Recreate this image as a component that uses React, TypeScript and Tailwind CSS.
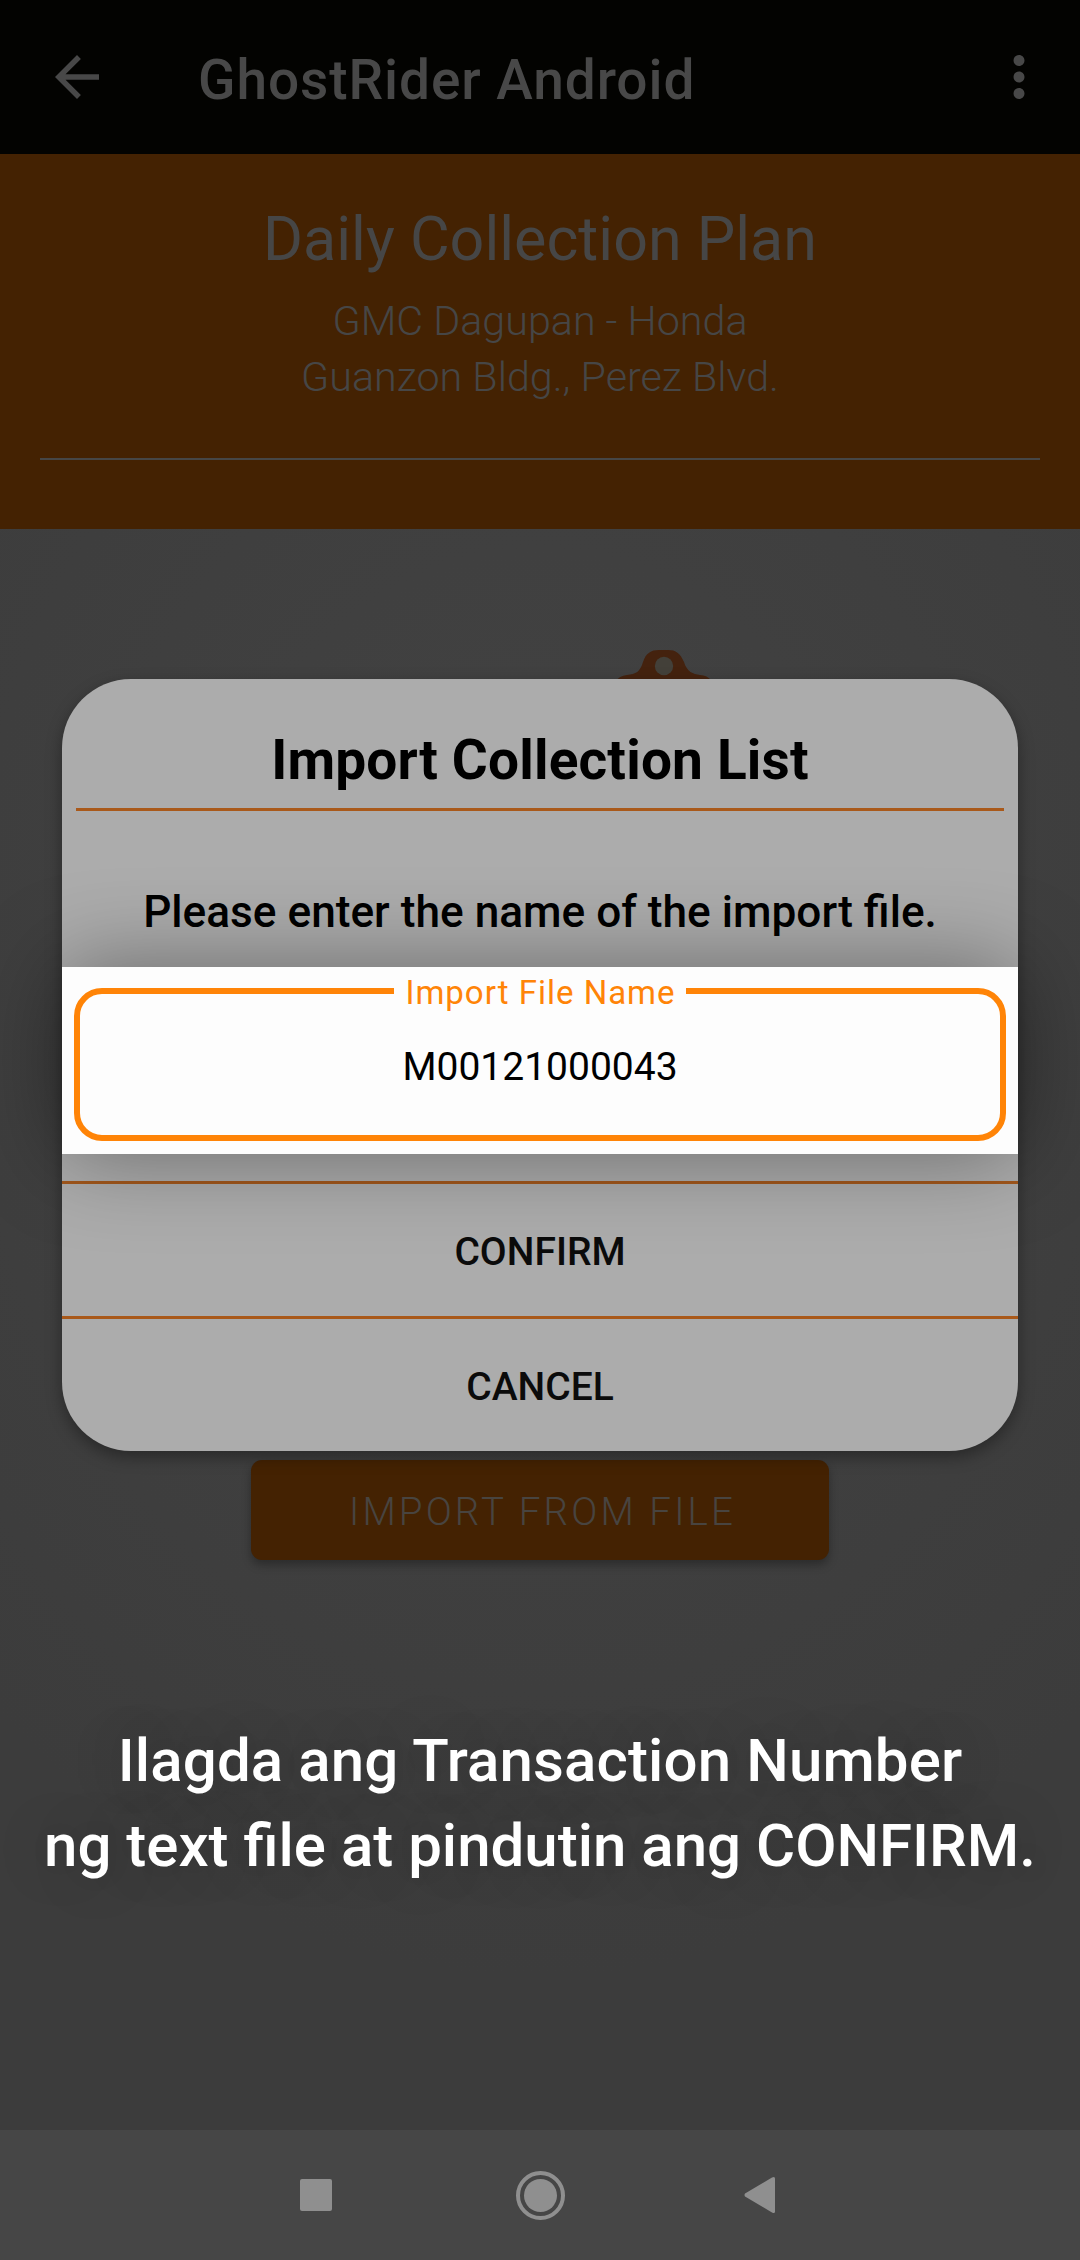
import React from "react";

function AppBar() {
  return (
    <header className="flex h-[154px] items-center bg-[#030301] px-[28px]">
      <svg viewBox="0 0 24 24" className="ml-4 size-[66px] fill-[#484848]">
        <path d="M20 11H7.83l5.59-5.59L12 4l-8 8 8 8 1.41-1.41L7.83 13H20v-2z" />
      </svg>
      <h1 className="ml-[88px] mt-[6px] text-[55px] font-medium leading-[64px] tracking-[0.93px] text-[#484848]">
        GhostRider Android
      </h1>
      <svg viewBox="0 0 24 24" className="ml-auto size-[66px] fill-[#484848]">
        <path d="M12 8c1.1 0 2-.9 2-2s-.9-2-2-2-2 .9-2 2 .9 2 2 2zm0 2c-1.1 0-2 .9-2 2s.9 2 2 2 2-.9 2-2-.9-2-2-2zm0 6c-1.1 0-2 .9-2 2s.9 2 2 2 2-.9 2-2-.9-2-2-2z" />
      </svg>
    </header>
  );
}

function PlanHeader() {
  return (
    <section className="flex h-[375px] flex-col items-center bg-[#442202] px-10 pt-[49px] text-center text-[#464646]">
      <h2 className="text-[61px] leading-[72px]">Daily Collection Plan</h2>
      <p className="mt-[18px] text-[41.25px] font-light leading-[56px]">GMC Dagupan - Honda</p>
      <p className="text-[41.25px] font-light leading-[56px]">Guanzon Bldg., Perez Blvd.</p>
      <div className="mt-[53px] h-[2px] w-full bg-[#464646]" />
    </section>
  );
}

function FileNameField() {
  return (
    <div className="relative h-[187px] bg-[#fdfdfd] px-3 pt-[21px] shadow-[0_0_90px_0px_rgba(0,0,0,0.4)]">
      <div className="flex h-[153px] items-center justify-center rounded-[28px] border-[6px] border-[#ff8407]">
        <span className="mt-[5px] text-[39px] leading-[46px] text-black">M00121000043</span>
      </div>
      <span className="absolute left-[332px] top-[6px] w-[292px] whitespace-nowrap bg-[#fdfdfd] pl-px text-center text-[33px] leading-[40px] tracking-[1px] text-[#ff8407]">
        Import File Name
      </span>
    </div>
  );
}

function ImportDialog() {
  return (
    <div className="absolute left-[62px] top-[679px] h-[772px] w-[956px] rounded-[69px] bg-[#acacac] text-center shadow-[0_6px_16px_rgba(0,0,0,0.35)]">
      <div className="mx-[14px] flex h-[132px] items-end justify-center border-b-[3px] border-[#a9591a] pb-[16px]">
        <h3 className="text-[55px] font-bold leading-[64px] tracking-[0.17px] text-black">
          Import Collection List
        </h3>
      </div>
      <div className="flex h-[156px] items-center justify-center pt-[46px]">
        <p className="whitespace-nowrap text-[44.2px] font-medium leading-[52px] text-black">
          Please enter the name of the import file.
        </p>
      </div>
      <FileNameField />
      <div className="mt-[27px] border-t-[3px] border-[#a3581c]">
        <button className="block h-[132px] w-full pt-[4px] text-[39px] font-medium text-[#0b0b0b]">CONFIRM</button>
      </div>
      <div className="border-t-[3px] border-[#a9591a]">
        <button className="block h-[132px] w-full pt-[4px] text-[39px] font-medium text-[#0b0b0b]">CANCEL</button>
      </div>
    </div>
  );
}

function NavBar() {
  return (
    <nav className="flex h-[130px] items-center bg-[#464646]">
      <div className="ml-[300px] size-8 rounded-[2px] bg-[#8f8f8f]" />
      <div className="ml-[184px] flex size-[49px] items-center justify-center rounded-full border-4 border-[#8f8f8f]">
        <div className="size-[33px] rounded-full bg-[#8f8f8f]" />
      </div>
      <svg viewBox="0 0 32 38" className="ml-[179px] h-[38px] w-8 fill-[#8f8f8f]">
        <path d="M1 17.6Q0 19 1 20.4L28 36.6Q31 38 31 35.5V2.5Q31 0 28 1.4Z" />
      </svg>
    </nav>
  );
}

export default function App() {
  return (
    <div className="relative flex h-[2260px] w-[1080px] flex-col overflow-hidden bg-[#3c3c3c] font-['Roboto',sans-serif]">
      <AppBar />
      <PlanHeader />
      <main className="flex flex-1 flex-col items-center bg-[radial-gradient(ellipse_800px_1000px_at_50%_28%,#434343,#3c3c3c)]">
        <svg viewBox="0 0 96 32" className="ml-[248px] mt-[120px] h-[32px] w-24 shrink-0">
          <path
            d="M0 32Q3 27 11 26C20 25 24 23 27 13C30 4 35 1 43 1H52C60 1 64 4 68 13C71 23 77 25 84 26Q91 26 96 32Z"
            fill="#44220e"
          />
          <circle cx="48" cy="17" r="9.2" fill="#434039" />
        </svg>
        <button className="mt-[779px] flex h-[100px] w-[578px] shrink-0 items-center justify-center rounded-[11px] bg-[#442202] pl-[5px] pt-[3px] text-[38.5px] font-light tracking-[3.13px] text-[#484440] shadow-[0_5px_10px_rgba(0,0,0,0.3)]">
          IMPORT FROM FILE
        </button>
        <p className="mt-[158px] whitespace-nowrap text-center text-[60px] font-medium leading-[85px] text-white [text-shadow:0_0_50px_rgba(0,0,0,0.25)]">
          <span className="tracking-[0.13px]">Ilagda ang Transaction Number</span>
          <br />
          ng text file at pindutin ang CONFIRM.
        </p>
      </main>
      <NavBar />
      <ImportDialog />
    </div>
  );
}
